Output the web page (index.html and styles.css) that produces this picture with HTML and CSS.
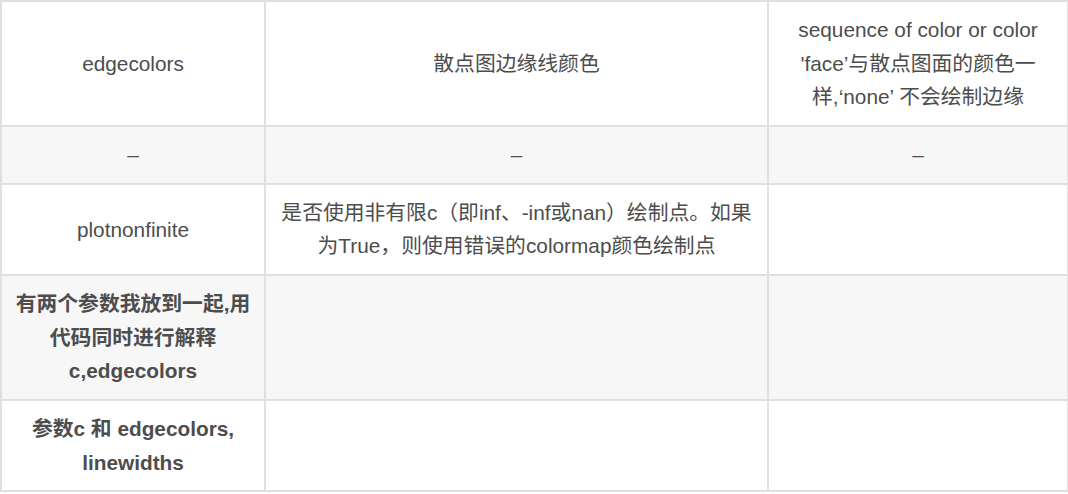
FILE: index.html
```html
<!DOCTYPE html>
<html lang="zh-CN">
<head>
<meta charset="utf-8">
<title>scatter 参数</title>
<link rel="stylesheet" href="styles.css">
</head>
<body>
<table class="params">
  <colgroup>
    <col class="c1">
    <col class="c2">
    <col class="c3">
  </colgroup>
  <tbody>
    <tr>
      <td>edgecolors</td>
      <td>散点图边缘线颜色</td>
      <td>sequence of color or color 'face’与散点图面的颜色一样,‘none’ 不会绘制边缘</td>
    </tr>
    <tr class="alt">
      <td>–</td>
      <td>–</td>
      <td>–</td>
    </tr>
    <tr>
      <td>plotnonfinite</td>
      <td>是否使用非有限c（即inf、-inf或nan）绘制点。如果为True，则使用错误的colormap颜色绘制点</td>
      <td></td>
    </tr>
    <tr class="alt">
      <td class="strong">有两个参数我放到一起,用代码同时进行解释 c,edgecolors</td>
      <td></td>
      <td></td>
    </tr>
    <tr>
      <td class="strong">参数c 和 edgecolors, linewidths</td>
      <td></td>
      <td></td>
    </tr>
  </tbody>
</table>
</body>
</html>
```

FILE: styles.css
```css
html, body {
  margin: 0;
  padding: 0;
  background: #ffffff;
}

.params {
  width: 1067px;
  border-collapse: collapse;
  table-layout: fixed;
  font-family: "Liberation Sans", "Noto Sans CJK SC", sans-serif;
  font-size: 20.8px;
  line-height: 33.5px;
  color: #4d4d4d;
}

.c1 { width: 264px; }
.c2 { width: 503px; }
.c3 { width: 300px; }

.params td {
  border: 2px solid #e0dfe2;
  padding: 11.2px 13px;
  text-align: center;
  vertical-align: middle;
}

.params tr.alt td {
  background: #f7f7f8;
}

.params td.strong {
  font-weight: bold;
}
```
